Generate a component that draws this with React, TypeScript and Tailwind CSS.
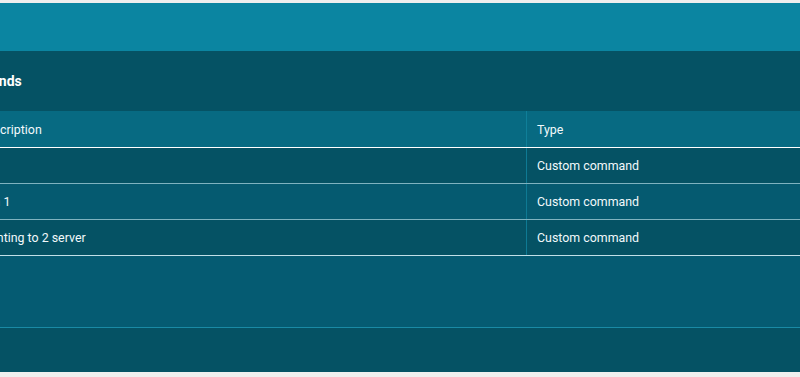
const rows = [
  { desc: 'ls', type: 'Custom command' },
  { desc: 'Run 1', type: 'Custom command' },
  { desc: 'Pointing to 2 server', type: 'Custom command' },
]

export default function App() {
  return (
    <div
      className="h-[377px] w-[800px] overflow-hidden bg-[#efefee] pt-[3px] text-[#f2f9fb]"
      style={{ fontFamily: 'Roboto, "Noto Sans", sans-serif' }}
    >
      <div className="h-[48px] bg-[#0b85a1]" />
      <div className="flex h-[60px] items-center bg-[#055264]">
        <h2 className="-ml-[50px] text-[14px] font-bold text-white">Commands</h2>
      </div>
      <div className="-ml-[32px] w-[832px]">
        <div className="grid h-[37px] grid-cols-[559px_1fr] border-b border-white bg-[#076a82] text-[12.4px]">
          <div className="flex items-center border-r border-[#0f7f99] pl-[11px] pt-[2px]">Description</div>
          <div className="flex items-center pl-[10px] pt-[2px]">Type</div>
        </div>
        {rows.map((row, idx) => (
          <div
            key={idx}
            className={
              'grid h-[36px] grid-cols-[559px_1fr] border-b text-[12.4px] ' +
              (idx === 1 ? 'bg-[#055a70] ' : 'bg-[#055264] ') +
              (idx === rows.length - 1 ? 'border-[#c2e0e8]' : 'border-[#7fb3c0]')
            }
          >
            <div className="flex items-center border-r border-[#0e7a94] pl-[11px] pt-[2px]">{row.desc}</div>
            <div className="flex items-center pl-[10px] pt-[2px]">{row.type}</div>
          </div>
        ))}
      </div>
      <div className="h-[72px] border-b border-[#1a8aa5] bg-[#055b72]" />
      <div className="h-[44px] bg-[#055264]" />
    </div>
  )
}
